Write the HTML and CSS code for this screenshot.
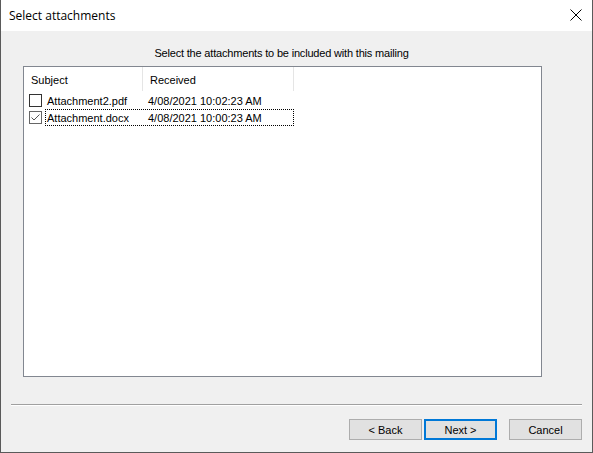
FILE: index.html
```html
<!DOCTYPE html>
<html lang="en">
<head>
  <meta charset="UTF-8">
  <title>Select attachments</title>
  <link rel="stylesheet" href="styles.css">
</head>
<body>
  <div class="window">
    <div class="titlebar">
      <span class="title">Select attachments</span>
      <svg class="close" width="12" height="12" viewBox="0 0 12 12">
        <path d="M0.5 0.5 L11.5 11.5 M11.5 0.5 L0.5 11.5" stroke="#000" stroke-width="1" fill="none"/>
      </svg>
    </div>
    <div class="content">
      <div class="prompt">Select the attachments to be included with this mailing</div>
      <div class="listview">
        <div class="header">
          <div class="col col-subject">Subject</div>
          <div class="col col-received">Received</div>
        </div>
        <div class="row">
          <span class="check"></span>
          <div class="cells">
            <span class="cell-subject">Attachment2.pdf</span>
            <span class="cell-received">4/08/2021 10:02:23 AM</span>
          </div>
        </div>
        <div class="row">
          <span class="check checked">
            <svg width="11" height="11" viewBox="0 0 11 11">
              <path d="M1.5 5.5 L4 8 L9.5 2.5" stroke="#555" stroke-width="1" fill="none"/>
            </svg>
          </span>
          <div class="cells focused">
            <span class="cell-subject">Attachment.docx</span>
            <span class="cell-received">4/08/2021 10:00:23 AM</span>
          </div>
        </div>
      </div>
      <div class="separator"></div>
      <div class="buttons">
        <button class="btn">&lt; Back</button>
        <button class="btn default">Next &gt;</button>
        <button class="btn cancel">Cancel</button>
      </div>
    </div>
  </div>
</body>
</html>
```

FILE: styles.css
```css
html, body {
  margin: 0;
  padding: 0;
}
body {
  font-family: "Liberation Sans", Arial, sans-serif;
  font-size: 11px;
  color: #000;
}
.window {
  width: 593px;
  height: 453px;
  box-sizing: border-box;
  border: 1px solid #5a5a5a;
  border-top: none;
  background-color: #f0f0f0;
  display: flex;
  flex-direction: column;
}
.titlebar {
  height: 31px;
  background-color: #fff;
  display: flex;
  align-items: center;
  justify-content: space-between;
  padding: 0 10px 0 8px;
}
.title {
  font-family: "Open Sans", "Noto Sans", sans-serif;
  font-size: 12px;
  margin-top: -1px;
}
.close {
  display: block;
  margin-top: -2px;
}
.content {
  flex: 1;
  display: flex;
  flex-direction: column;
}
.prompt {
  text-align: center;
  margin-top: 16px;
  height: 13px;
  line-height: 13px;
  padding-right: 30px;
  letter-spacing: -0.18px;
}
.listview {
  margin: 6px 0 0 22px;
  width: 519px;
  height: 311px;
  box-sizing: border-box;
  border: 1px solid #828790;
  background-color: #fff;
}
.header {
  display: flex;
  height: 24px;
  margin-bottom: 1px;
}
.col {
  line-height: 26px;
  padding-left: 7px;
  box-sizing: border-box;
  border-right: 1px solid #e5e5e5;
}
.col-subject {
  width: 119px;
}
.col-received {
  width: 151px;
}
.row {
  display: flex;
  align-items: center;
  height: 17px;
}
.check {
  width: 13px;
  height: 13px;
  box-sizing: border-box;
  border: 1px solid #333;
  margin-left: 5px;
  margin-right: 3px;
  display: flex;
  align-items: center;
  justify-content: center;
}
.check.checked {
  border-color: #666;
}
.check svg {
  display: block;
}
.cells {
  display: flex;
  height: 17px;
  line-height: 16px;
  box-sizing: border-box;
  border: 1px dotted transparent;
  width: 249px;
}
.cells.focused {
  border-color: #000;
}
.cell-subject {
  width: 101px;
  padding-left: 1px;
}
.cell-received {
  flex: 1;
}
.separator {
  margin: 27px 10px 0 10px;
  height: 1px;
  background-color: #a0a0a0;
  border-bottom: 1px solid #fff;
}
.buttons {
  display: flex;
  justify-content: flex-end;
  margin-top: 13px;
  padding-right: 10px;
  gap: 2px;
}
.btn {
  width: 73px;
  height: 21px;
  box-sizing: border-box;
  background-color: #e1e1e1;
  border: 1px solid #adadad;
  font-family: "Liberation Sans", Arial, sans-serif;
  font-size: 11px;
  color: #000;
  padding: 0;
}
.btn.default {
  border: 2px solid #0078d7;
}
.btn.cancel {
  margin-left: 10px;
}
```
